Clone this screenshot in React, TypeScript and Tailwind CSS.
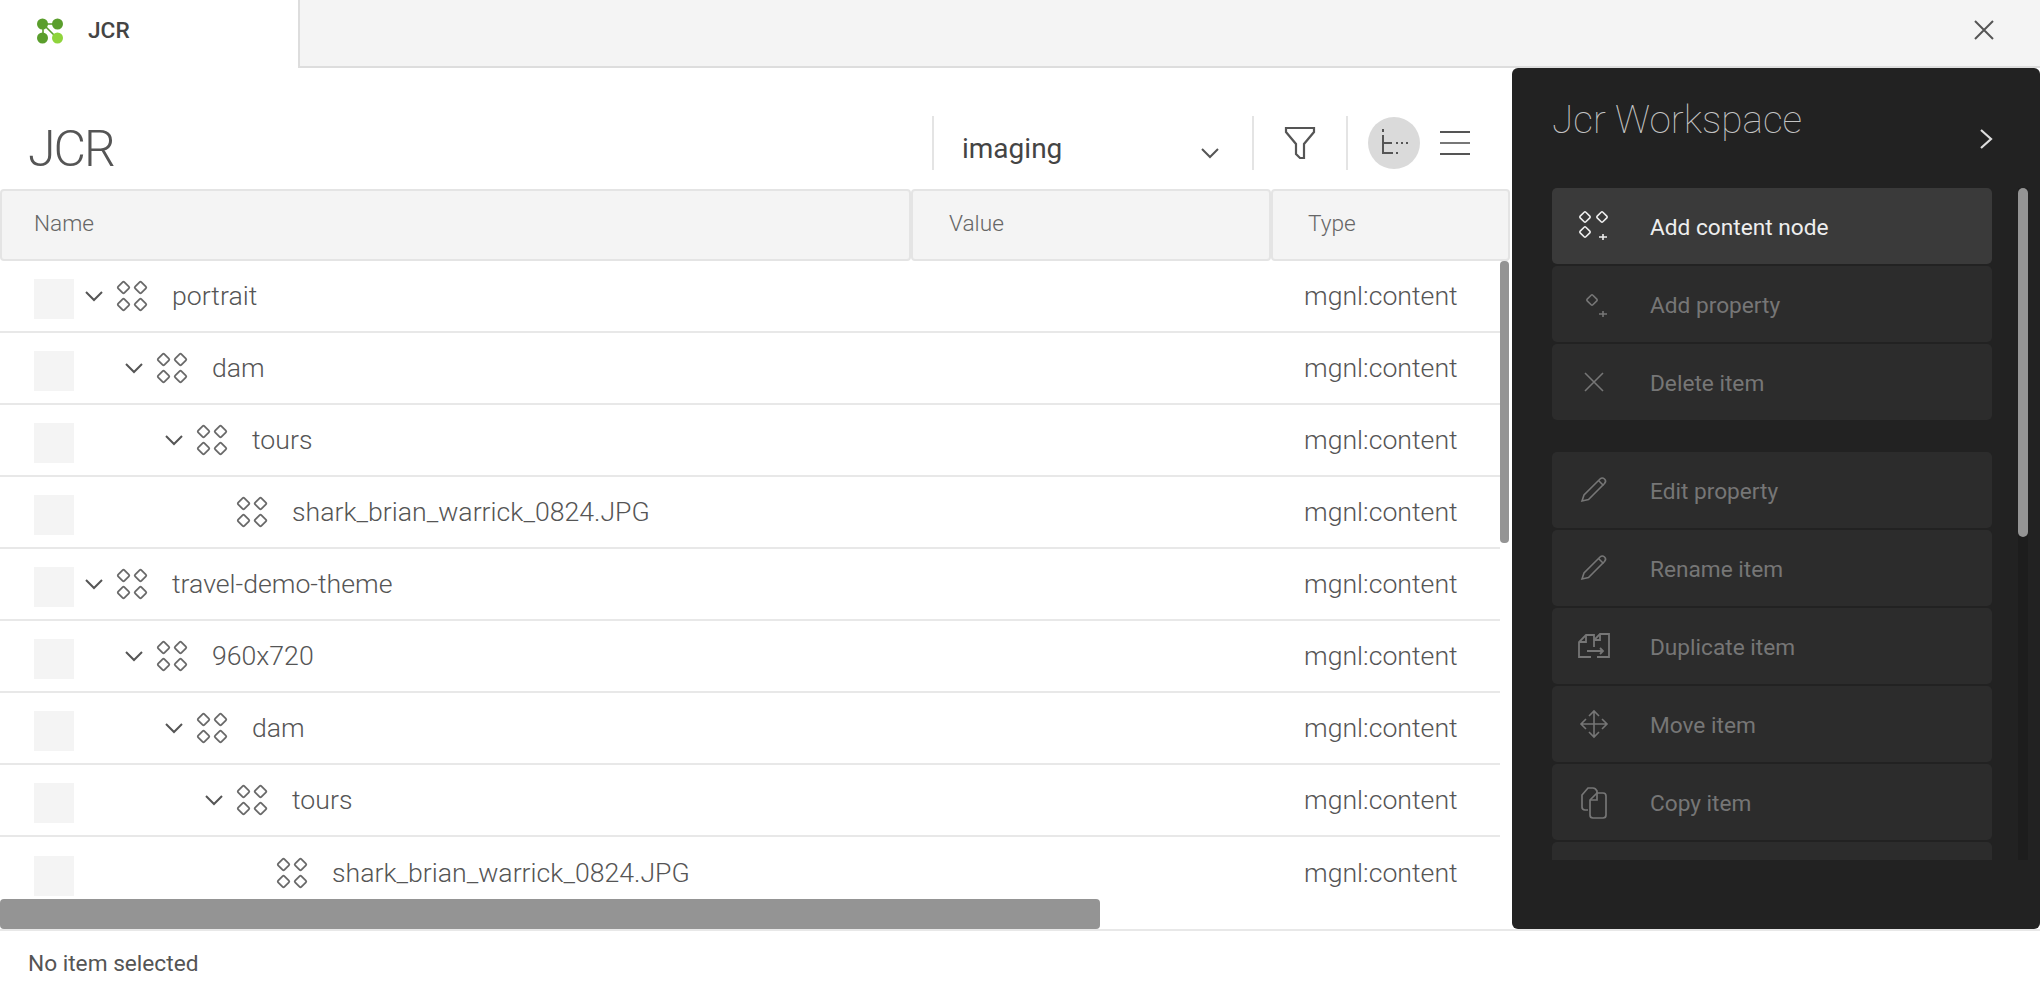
import type { ReactNode } from "react";

type TreeRow = { label: string; level: number; leaf?: boolean };

const rows: TreeRow[] = [
  { label: "portrait", level: 0 },
  { label: "dam", level: 1 },
  { label: "tours", level: 2 },
  { label: "shark_brian_warrick_0824.JPG", level: 3, leaf: true },
  { label: "travel-demo-theme", level: 0 },
  { label: "960x720", level: 1 },
  { label: "dam", level: 2 },
  { label: "tours", level: 3 },
  { label: "shark_brian_warrick_0824.JPG", level: 4, leaf: true },
];

function Diamond({ x, y, s = 4 }: { x: number; y: number; s?: number }) {
  return <rect x={x - s} y={y - s} width={s * 2} height={s * 2} rx="1.2" transform={`rotate(45 ${x} ${y})`} />;
}

function NodeIcon() {
  return (
    <svg width="34" height="34" viewBox="0 0 34 34" fill="none" stroke="#6a6a6a" strokeWidth="1.8">
      <Diamond x={8.5} y={8.5} s={4.4} />
      <Diamond x={25.5} y={8.5} s={4.4} />
      <Diamond x={8.5} y={25.5} s={4.4} />
      <Diamond x={25.5} y={25.5} s={4.4} />
    </svg>
  );
}

function Chevron({ className = "" }: { className?: string }) {
  return (
    <svg className={className} width="20" height="14" viewBox="0 0 20 14" fill="none" stroke="#555" strokeWidth="2">
      <path d="M2 3l8 8 8-8" />
    </svg>
  );
}

function Logo() {
  return (
    <svg width="28" height="28" viewBox="0 0 28 28">
      <path d="M7 7L21 21M7 7h14M7 7v14" stroke="#5a9e2c" strokeWidth="1.6" />
      <circle cx="6.500" cy="7" r="5.500" fill="#5a9e2c" />
      <circle cx="21.500" cy="7" r="5.500" fill="#5a9e2c" />
      <circle cx="6.500" cy="21" r="5.500" fill="#5a9e2c" />
      <circle cx="21.500" cy="21" r="5.500" fill="#8fd43c" />
    </svg>
  );
}

function Pencil() {
  return (
    <svg width="30" height="30" viewBox="0 0 30 30" fill="none" stroke="currentColor" strokeWidth="1.6">
      <path d="M3 26l2-6L21 4c1.500-1.300 3-1.300 4.500 0s1.300 3 0 4.500L9.500 24.500z" />
      <path d="M19.500 5.500l5 5" />
    </svg>
  );
}

const itemIcons: Record<string, ReactNode> = {
  add: (
    <svg width="32" height="32" viewBox="0 0 32 32" fill="none" stroke="currentColor" strokeWidth="1.6">
      <Diamond x={7} y={7} s={4} />
      <Diamond x={24} y={7} s={4} />
      <Diamond x={7} y={22} s={4} />
      <path d="M21 27h8M25 24v6" />
    </svg>
  ),
  prop: (
    <svg width="32" height="32" viewBox="0 0 32 32" fill="none" stroke="currentColor" strokeWidth="1.6">
      <Diamond x={14} y={12} s={4} />
      <path d="M21 26h8M25 23v6" />
    </svg>
  ),
  del: (
    <svg width="24" height="24" viewBox="0 0 24 24" fill="none" stroke="currentColor" strokeWidth="1.6">
      <path d="M3 3l18 18M21 3L3 21" />
    </svg>
  ),
  pencil: <Pencil />,
  dup: (
    <svg width="34" height="30" viewBox="0 0 34 30" fill="none" stroke="currentColor" strokeWidth="1.8">
      <path d="M14 26H2V11l7-7h8v5" />
      <path d="M9 4v7H2" />
      <path d="M20 26h12V3H23l-6 6v7" />
      <path d="M23 3v6h-6" />
      <path d="M10 20h16M23 17l3 3-3 3" />
    </svg>
  ),
  move: (
    <svg width="30" height="30" viewBox="0 0 30 30" fill="none" stroke="currentColor" strokeWidth="1.6">
      <path d="M15 2v26M2 15h26M10 7l5-5 5 5M10 23l5 5 5-5M7 10l-5 5 5 5M23 10l5 5-5 5" />
    </svg>
  ),
  copy: (
    <svg width="30" height="34" viewBox="0 0 30 34" fill="none" stroke="currentColor" strokeWidth="1.7">
      <path d="M9 25H6c-2 0-3-1-3-3V10l6-7h5c2 0 3 1 4 3v2" />
      <path d="M11 15l7-7h6c2 0 3 1 3 3v19c0 2-1 3-3 3H14c-2 0-3-1-3-3z" />
      <path d="M18 8v7h-7" />
    </svg>
  ),
};

function ActionItem({ icon, label, active }: { icon: string; label: string; active?: boolean }) {
  return (
    <div
      className={`flex h-[76px] shrink-0 items-center rounded-[5px] ${
        active ? "bg-[#3a3a3a] text-[#eeeeee]" : "bg-[#2c2c2c] text-[#767676]"
      }`}
    >
      <div className="flex w-[84px] justify-center">{itemIcons[icon]}</div>
      <span className="pl-[14px] pt-[5px] text-[22.67px] leading-none">{label}</span>
    </div>
  );
}

function TableRow({ row, last }: { row: TreeRow; last: boolean }) {
  return (
    <div
      className={`grid h-[72px] w-[1500px] shrink-0 grid-cols-[1271px_1fr] items-center border-[#e8e8e8] ${
        last ? "" : "border-b-2"
      }`}
    >
      <div className="flex items-center pl-[34px]">
        <div className="mt-[6px] h-[40px] w-[40px] shrink-0 bg-[#f4f4f4]" />
        <div className="flex items-center" style={{ marginLeft: row.level * 40 }}>
          <div className="flex w-[40px] justify-center">{!row.leaf && <Chevron />}</div>
          <div className="ml-[1px]">
            <NodeIcon />
          </div>
          <span className="pl-[23px] text-[26.67px] font-light leading-none text-[#555555]">{row.label}</span>
        </div>
      </div>
      <span className="pl-[33px] text-[26.67px] font-light leading-none text-[#555555]">mgnl:content</span>
    </div>
  );
}

export default function App() {
  return (
    <div
      className="flex h-[984px] w-[2040px] flex-col overflow-hidden bg-white"
      style={{ fontFamily: "Roboto, 'Liberation Sans', sans-serif" }}
    >
      {/* tab strip */}
      <div className="flex h-[68px] shrink-0 bg-[#f4f4f4]">
        <div className="flex w-[300px] items-center border-r-2 border-[#dddddd] bg-white pb-[6px] pl-[36px]">
          <Logo />
          <span className="pl-[24px] text-[22.67px] font-medium leading-none text-[#444444]">JCR</span>
        </div>
        <div className="flex flex-1 items-center justify-end border-b-2 border-[#dddddd] pb-[6px] pr-[46px]">
          <svg width="20" height="20" viewBox="0 0 20 20" fill="none" stroke="#555" strokeWidth="2">
            <path d="M1 1l18 18M19 1L1 19" />
          </svg>
        </div>
      </div>

      <div className="flex h-[861px] shrink-0">
        {/* main table */}
        <div className="relative flex w-[1512px] flex-col overflow-hidden">
          <div className="flex h-[121px] shrink-0 justify-between pl-[28px] pt-[48px]">
            <h1 className="text-[50px] font-light leading-[66px] tracking-[-2px] text-[#555555]">JCR</h1>
            <div className="flex h-[54px] items-center">
              <div className="h-[54px] w-[2px] bg-[#e4e4e4]" />
              <div className="mt-[12px] flex w-[318px] items-center justify-between pl-[28px] pr-[32px]">
                <span className="text-[28px] leading-none text-[#444444]">imaging</span>
                <Chevron className="mt-[8px]" />
              </div>
              <div className="h-[54px] w-[2px] bg-[#e4e4e4]" />
              <div className="flex w-[92px] justify-center">
                <svg width="32" height="34" viewBox="0 0 32 34" fill="none" stroke="#555" strokeWidth="2.2">
                  <path d="M2 2h28v4L20 18v14h-4l-4-4V18L2 6z" />
                </svg>
              </div>
              <div className="h-[54px] w-[2px] bg-[#e4e4e4]" />
              <div className="ml-[20px] flex h-[52px] w-[52px] items-center justify-center rounded-full bg-[#dadada]">
                <svg width="28" height="32" viewBox="0 0 28 32" fill="none" stroke="#555" strokeWidth="2">
                  <path d="M3 8v18h10M3 16h9" />
                  <path d="M3 2v3M16 16h2M21 16h2M26 16h2M16 26h2" />
                </svg>
              </div>
              <div className="ml-[20px] mr-[42px] flex w-[30px] flex-col gap-[9px]">
                <div className="h-[2px] bg-[#555555]" />
                <div className="h-[2px] bg-[#777777]" />
                <div className="h-[2px] bg-[#555555]" />
              </div>
            </div>
          </div>

          <div className="grid h-[72px] w-[1510px] shrink-0 grid-cols-[911px_360px_239px] text-[22.67px] font-light text-[#666666]">
            <div className="flex items-center rounded-[4px] border-2 border-[#e4e4e4] bg-[#f4f4f4] pb-[2px] pl-[32px]">Name</div>
            <div className="flex items-center rounded-[4px] border-2 border-[#e4e4e4] bg-[#f4f4f4] pb-[2px] pl-[36px]">Value</div>
            <div className="flex items-center rounded-[4px] border-2 border-[#e4e4e4] bg-[#f4f4f4] pb-[2px] pl-[35px]">Type</div>
          </div>

          <div className="flex min-h-0 flex-1">
            <div className="flex flex-col overflow-hidden">
              {rows.map((row, i) => (
                <TableRow key={i} row={row} last={i === rows.length - 1} />
              ))}
            </div>
            <div className="h-[282px] w-[9px] shrink-0 rounded-[4px] bg-[#949494]" />
          </div>

          <div className="absolute bottom-0 left-0 h-[30px] w-[1100px] rounded-[4px] bg-[#949494]" />
        </div>

        {/* action bar */}
        <div className="flex w-[528px] flex-col rounded-[6px] bg-[#222222]">
          <div className="flex h-[120px] shrink-0 justify-between pl-[40px] pr-[47px] pt-[30px]">
            <h2 className="text-[38.7px] font-thin leading-[44px] text-[#c4c4c4]">Jcr Workspace</h2>
            <svg className="mt-[30px]" width="14" height="22" viewBox="0 0 14 22" fill="none" stroke="#dddddd" strokeWidth="2.2">
              <path d="M2 2l10 9-10 9" />
            </svg>
          </div>
          <div className="flex h-[672px] shrink-0 pl-[40px]">
            <div className="flex w-[440px] flex-col gap-[2px] overflow-hidden">
              <ActionItem icon="add" label="Add content node" active />
              <ActionItem icon="prop" label="Add property" />
              <ActionItem icon="del" label="Delete item" />
              <div className="h-[28px] shrink-0" />
              <ActionItem icon="pencil" label="Edit property" />
              <ActionItem icon="pencil" label="Rename item" />
              <ActionItem icon="dup" label="Duplicate item" />
              <ActionItem icon="move" label="Move item" />
              <ActionItem icon="copy" label="Copy item" />
              <ActionItem icon="copy" label="" />
            </div>
            <div className="ml-[26px] w-[10px] bg-[#1d1d1d]">
              <div className="h-[349px] rounded-[5px] bg-[#949494]" />
            </div>
          </div>
        </div>
      </div>

      <div className="flex min-h-0 flex-1 items-end border-t-2 border-[#e8e8e8] pb-[8px] pl-[28px] text-[22.67px] leading-[24px] text-[#555555]">
        No item selected
      </div>
    </div>
  );
}
